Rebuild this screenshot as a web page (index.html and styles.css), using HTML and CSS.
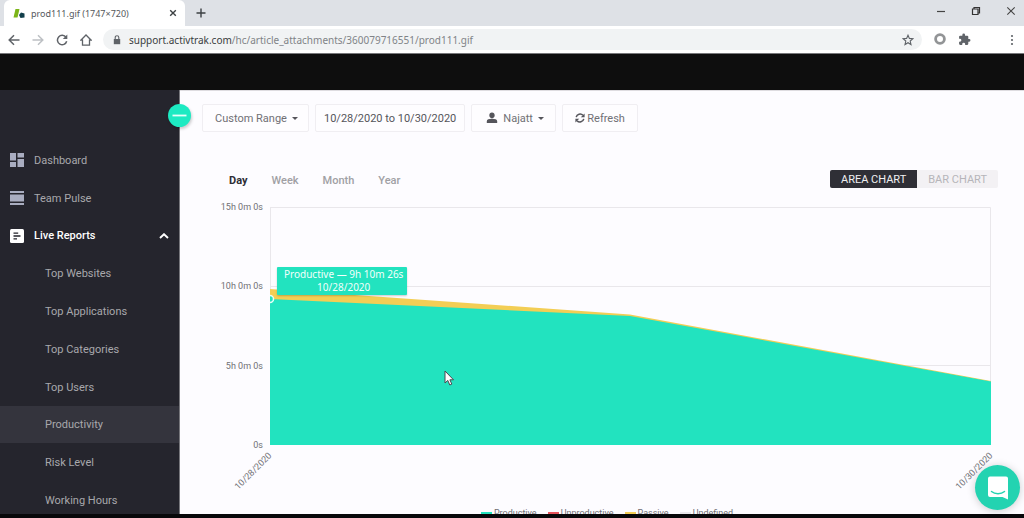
FILE: index.html
```html
<!DOCTYPE html>
<html lang="en">
<head>
<meta charset="utf-8">
<title>prod111.gif (1747×720)</title>
<link rel="stylesheet" href="styles.css">
</head>
<body>
<header class="browser">
  <div class="tabstrip">
    <div class="tab">
      <svg class="favicon" viewBox="0 0 12 12" width="12" height="12"><path d="M2.500 2h4l-2 8.500h-4z" fill="#7cb518"/><path d="M8 5.500l3.500 1v4l-4 .5-1.500-3z" fill="#123f4b"/></svg>
      <span class="tab-title">prod111.gif (1747×720)</span>
      <button class="plain" aria-label="Close tab"><svg viewBox="0 0 8 8" width="8" height="8"><path d="M1.200 1.200l5.600 5.600M6.800 1.200L1.200 6.800" stroke="#3c4043" stroke-width="1.400"/></svg></button>
    </div>
    <button class="plain new-tab" aria-label="New tab"><svg viewBox="0 0 10 10" width="10" height="10"><path d="M5 .5v9M.5 5h9" stroke="#3c4043" stroke-width="1.400"/></svg></button>
    <div class="window-controls">
      <button class="plain" aria-label="Minimize"><svg viewBox="0 0 10 10" width="10" height="10"><path d="M1 5.500h8" stroke="#444" stroke-width="1.200"/></svg></button>
      <button class="plain" aria-label="Restore"><svg viewBox="0 0 10 10" width="10" height="10"><path d="M1.500 3h5.500v5.500H1.500zM3 3V1.500h5.500V7H7" fill="none" stroke="#333" stroke-width="1.200"/></svg></button>
      <button class="plain" aria-label="Close"><svg viewBox="0 0 10 10" width="10" height="10"><path d="M1.300 1.300l7.400 7.400M8.700 1.300L1.300 8.700" stroke="#444" stroke-width="1.100"/></svg></button>
    </div>
  </div>
  <div class="navbar">
    <button class="plain" aria-label="Back"><svg viewBox="0 0 12 12" width="12" height="12"><path d="M11.500 6H1.500M6 1.200L1.200 6 6 10.800" fill="none" stroke="#5f6368" stroke-width="1.500"/></svg></button>
    <button class="plain" aria-label="Forward"><svg viewBox="0 0 12 12" width="12" height="12"><path d="M.5 6h10M6 1.200L10.800 6 6 10.800" fill="none" stroke="#bdc0c4" stroke-width="1.500"/></svg></button>
    <button class="plain" aria-label="Reload"><svg viewBox="0 0 12 12" width="12" height="12"><path d="M10 3.300A4.700 4.700 0 1 0 10.700 7.300" fill="none" stroke="#5f6368" stroke-width="1.500"/><path d="M11.300.5v4.500H6.800z" fill="#5f6368"/></svg></button>
    <button class="plain" aria-label="Home"><svg viewBox="0 0 12 12" width="12" height="12"><path d="M.8 6.200L6 1l5.200 5.200H9.500v5H2.500v-5z" fill="none" stroke="#5f6368" stroke-width="1.300"/></svg></button>
    <div class="address">
      <svg viewBox="0 0 8 10" width="8" height="10"><path d="M.8 4h6.400v5.200H.8z" fill="#5f6368"/><path d="M2.200 4V2.500a1.800 1.800 0 0 1 3.600 0V4" fill="none" stroke="#5f6368" stroke-width="1.100"/></svg>
      <a class="url" href="#"><span class="host">support.activtrak.com</span>/hc/article_attachments/360079716551/prod111.gif</a>
      <button class="plain" aria-label="Bookmark"><svg viewBox="0 0 12 12" width="12" height="12"><path d="M6 1.200l1.400 3.200 3.500.3-2.700 2.300.8 3.500L6 8.700l-3 1.800.8-3.500-2.700-2.300 3.500-.3z" fill="none" stroke="#5f6368" stroke-width="1.100"/></svg></button>
    </div>
    <div class="extensions">
      <svg viewBox="0 0 12 12" width="12" height="12"><circle cx="6" cy="6" r="4.400" fill="#fff" stroke="#929496" stroke-width="2.800"/></svg>
      <svg viewBox="0 0 24 24" width="13" height="13"><path fill="#5f6368" d="M20.500 11H19V7a2 2 0 0 0-2-2h-4V3.500a2.500 2.500 0 0 0-5 0V5H4a2 2 0 0 0-2 2v3.800h1.500a2.700 2.700 0 0 1 0 5.400H2V20a2 2 0 0 0 2 2h3.800v-1.500a2.700 2.700 0 0 1 5.400 0V22H17a2 2 0 0 0 2-2v-4h1.500a2.500 2.500 0 0 0 0-5z"/></svg>
    </div>
    <button class="plain" aria-label="Browser menu"><svg viewBox="0 0 4 12" width="4" height="12"><g fill="#5f6368"><circle cx="2" cy="2" r="1.100"/><circle cx="2" cy="6" r="1.100"/><circle cx="2" cy="10" r="1.100"/></g></svg></button>
  </div>
</header>
<div class="banner"></div>
<div class="app">
  <aside class="sidebar">
    <nav class="menu">
      <a class="item" href="#"><svg viewBox="0 0 14 14" width="14" height="14"><path fill="#a9adc0" d="M0 0h6v7.500H0zM7.500 0H14v4.500H7.500zM0 9h6v5H0zM7.500 6H14v8H7.500z"/></svg>Dashboard</a>
      <a class="item" href="#"><svg viewBox="0 0 14 14" width="14" height="14"><path fill="#a9adc0" d="M0 0h14v2H0zM0 3.500h14v7H0zM0 12h14v2H0z"/></svg>Team Pulse</a>
      <a class="item open" href="#"><svg viewBox="0 0 14 14" width="14" height="14"><rect width="14" height="14" rx="1.500" fill="#fff"/><path d="M3.500 4.200h4.700M3.500 7h7M3.500 9.800h3.500" stroke="#25252d" stroke-width="1.300"/></svg>Live Reports<svg class="chevron" viewBox="0 0 10 6" width="10" height="6"><path d="M1 5l4-3.800L9 5" fill="none" stroke="#fff" stroke-width="1.900"/></svg></a>
      <a class="item sub" href="#">Top Websites</a>
      <a class="item sub" href="#">Top Applications</a>
      <a class="item sub" href="#">Top Categories</a>
      <a class="item sub" href="#">Top Users</a>
      <a class="item sub current" href="#">Productivity</a>
      <a class="item sub" href="#">Risk Level</a>
      <a class="item sub" href="#">Working Hours</a>
    </nav>
  </aside>
  <button class="collapse" aria-label="Collapse menu"><svg viewBox="0 0 23 23" width="23" height="23"><path d="M4.500 11.500h14" stroke="#e5fffa" stroke-width="1.800"/></svg></button>
  <main class="report">
    <div class="filters">
      <label class="filter custom"><select aria-label="Range"><option>Custom Range</option></select><svg viewBox="0 0 6 3" width="6" height="3"><path d="M0 0h6L3 3z" fill="#55555b"/></svg></label>
      <button class="filter date">10/28/2020 to 10/30/2020</button>
      <label class="filter user"><svg viewBox="0 0 12 12" width="12" height="12"><path d="M6 .5c1.700 0 2.700 1.200 2.700 2.800S7.700 6.300 6 6.300 3.300 4.900 3.300 3.300 4.300.5 6 .5zM.8 11V9.300C.8 7.500 3 6.800 6 6.800s5.200.7 5.200 2.500V11z" fill="#55555b"/></svg><select aria-label="User"><option>Najatt</option></select><svg viewBox="0 0 6 3" width="6" height="3"><path d="M0 0h6L3 3z" fill="#55555b"/></svg></label>
      <button class="filter refresh"><svg viewBox="0 0 10 10" width="10" height="10"><path d="M1.200 4.200A4 4 0 0 1 8 2.300M8.800 5.800A4 4 0 0 1 2 7.700" fill="none" stroke="#55555b" stroke-width="1.500"/><path d="M9.600.4v3.800H5.800zM.4 9.600V5.800h3.800z" fill="#55555b"/></svg>Refresh</button>
    </div>
    <div class="chart-head">
      <div class="periods">
        <button class="plain active">Day</button>
        <button class="plain">Week</button>
        <button class="plain">Month</button>
        <button class="plain">Year</button>
      </div>
      <div class="toggle">
        <button class="plain on">AREA CHART</button>
        <button class="plain">BAR CHART</button>
      </div>
    </div>
    <div class="chart">
      <div class="y-axis"><span>15h 0m 0s</span><span>10h 0m 0s</span><span>5h 0m 0s</span><span>0s</span></div>
      <div class="plot">
        <svg class="areas" viewBox="0 0 721 238" preserveAspectRatio="none">
          <path d="M0 .5h720.500V238M0 79.500h721M0 158.500h721M.5 0v238" fill="none" stroke="#e9e7eb"/>
          <path d="M0 82L360 107.500 721 174v1L360 110 0 93z" fill="#f3ce55"/>
          <path d="M0 92L360 109 721 174.500V238H0z" fill="#22e3bf"/>
          <circle cx="0" cy="92" r="3.500" fill="#22e3bf" stroke="#e8fff9" stroke-width="1.500"/>
        </svg>
        <div class="tooltip">Productive — 9h 10m 26s<br>10/28/2020</div>
        <svg class="pointer" viewBox="0 0 10 16" width="10" height="16"><path d="M1 1v12l2.800-2.600L5.800 15l2-.9-1.900-4.300h3.600z" fill="#fff" stroke="#4d4650"/></svg>
      </div>
      <div class="x-axis"><span>10/28/2020</span><span>10/30/2020</span></div>
    </div>
    <div class="legend">
      <span class="key productive">Productive</span>
      <span class="key unproductive">Unproductive</span>
      <span class="key passive">Passive</span>
      <span class="key undefined">Undefined</span>
    </div>
  </main>
  <button class="chat" aria-label="Open chat"><svg viewBox="0 0 22 24" width="22" height="24"><path d="M3 .5h16a2 2 0 0 1 2 2V23.500L15.500 21H3a2 2 0 0 1-2-2V2.500a2 2 0 0 1 2-2z" fill="#fff"/><path d="M4.500 15.500c3.500 3 9.500 3 13 0" fill="none" stroke="#23d3b1" stroke-width="1.500" stroke-linecap="round"/></svg></button>
</div>
</body>
</html>
```
FILE: styles.css
```css
* { box-sizing: border-box; }

body {
  margin: 0;
  height: 100vh;
  display: flex;
  flex-direction: column;
  overflow: hidden;
  background: #08080a;
  font-family: Roboto, sans-serif;
  font-size: 11px;
}

button, select { font: inherit; color: inherit; }
a { color: inherit; text-decoration: none; }
svg { display: block; flex: none; }
.plain { border: 0; padding: 0; background: none; }

/* Browser window */
.browser {
  font-family: "Noto Sans", sans-serif;
  background: #fff;
  border-bottom: 1px solid #77777a;
}
.tabstrip {
  display: flex;
  align-items: center;
  height: 26px;
  background: #dee1e6;
}
.tab {
  display: flex;
  align-items: center;
  gap: 6px;
  width: 181px;
  height: 26px;
  margin-left: 4px;
  padding: 0 8px 0 9px;
  border-radius: 6px 6px 0 0;
  background: #fff;
}
.tab-title { flex: 1; font-size: 9px; color: #55585c; white-space: nowrap; }
.new-tab { margin-left: 11px; }
.window-controls {
  display: flex;
  gap: 25px;
  margin: 0 8px 4px auto;
}
.navbar {
  display: flex;
  align-items: center;
  gap: 12px;
  height: 27px;
  padding: 0 10px 0 8px;
}
.address {
  flex: 1;
  display: flex;
  align-items: center;
  gap: 8px;
  height: 21px;
  margin-left: -1px;
  padding: 0 8px 0 10px;
  border-radius: 11px;
  background: #f1f3f4;
}
.url { flex: 1; font-size: 10px; color: #808387; }
.host { color: #3a3d40; }
.extensions { display: flex; gap: 12px; margin-right: 27px; }

.banner { height: 36px; background: #0e0e0e; }

/* Application */
.app {
  flex: 1;
  min-height: 0;
  display: flex;
  position: relative;
  margin-bottom: 4px;
}
.sidebar {
  flex: none;
  width: 180px;
  padding-top: 51px;
  overflow: hidden;
  background: #25252d;
  border-right: 1px solid #77777c;
}
.menu { display: grid; grid-auto-rows: 1fr; height: 378px; }
.item {
  display: flex;
  align-items: center;
  gap: 10px;
  padding: 1px 10px 0;
  color: #a8a8ac;
}
.open { color: #fff; font-weight: 500; }
.sub { padding-left: 45px; }
.current { background: #34343d; }
.chevron { margin-left: auto; }
.collapse {
  position: absolute;
  left: 168px;
  top: 14px;
  padding: 0;
  border: 0;
  border-radius: 50%;
  background: #1deac2;
  box-shadow: 1px 2px 3px #0003;
}

.report {
  flex: 1;
  min-width: 0;
  overflow: hidden;
  background: #fdfcff;
  border-top: 1px solid #dedce0;
  color: #707075;
}
.filters { display: flex; gap: 6px; padding: 13px 22px 0; }
.filter {
  display: flex;
  align-items: center;
  gap: 5px;
  height: 28px;
  padding: 0 12px;
  border: 1px solid #f0eef2;
  border-radius: 2px;
  background: #fefdff;
}
.filter select {
  appearance: none;
  padding: 0;
  border: 0;
  background: none;
}
.custom { padding-right: 10px; }
.date { padding: 0 8px; color: #55555a; }
.user { padding: 0 11px 0 14px; }
.refresh { gap: 2px; }

.chart-head {
  display: flex;
  align-items: center;
  justify-content: space-between;
  margin-top: 38px;
  padding: 0 26px 0 49px;
}
.periods { display: flex; gap: 24px; padding-top: 2px; font-weight: 500; color: #a0a0a4; }
.active { color: #2e2e36; font-weight: 700; }
.toggle { display: flex; border-radius: 2px; overflow: hidden; background: #f3f1f4; color: #b6b5b9; }
.toggle button { height: 18px; padding: 0 11px; }
.toggle .on { background: #2f2f36; color: #f0f0f2; }

.chart {
  display: grid;
  grid-template-columns: 90px 1fr;
  grid-template-rows: 238px 61px;
  margin: 19px 33px 0 0;
  font-size: 9px;
}
.y-axis {
  display: flex;
  flex-direction: column;
  justify-content: space-between;
  margin: -6px 7px -6px 0;
  line-height: 12px;
  text-align: right;
}
.plot { position: relative; }
.areas { width: 100%; height: 100%; }
.tooltip {
  position: absolute;
  left: 7px;
  top: 60px;
  padding: 1px 4px 1px 7px;
  border-radius: 1px;
  background: #22e3bf;
  color: #f2fffc;
  font-family: "Noto Sans", sans-serif;
  font-size: 10px;
  line-height: 13px;
  text-align: center;
  white-space: nowrap;
  box-shadow: 0 1px 2px #0003;
}
.pointer { position: absolute; left: 174px; top: 163px; }
.x-axis {
  grid-column: 1 / 3;
  display: flex;
  justify-content: space-between;
  padding-top: 3px;
  line-height: 12px;
}
.x-axis span {
  width: 90px;
  height: 12px;
  text-align: right;
  transform: rotate(-45deg);
  transform-origin: right center;
}

.legend {
  display: flex;
  justify-content: center;
  gap: 11px;
  padding-left: 10px;
  font-size: 9px;
  line-height: 14px;
}
.key { display: flex; align-items: center; gap: 2px; }
.key::before { content: ""; width: 11px; height: 3px; background: #e9e7eb; }
.productive::before { background: #22e3bf; }
.unproductive::before { background: #e5535b; }
.passive::before { background: #f3ce55; }

.chat {
  position: absolute;
  right: 4px;
  bottom: 4px;
  display: grid;
  place-items: center;
  width: 45px;
  height: 45px;
  padding: 0;
  border: 0;
  border-radius: 50%;
  background: #23d3b1;
  box-shadow: 0 1px 8px #0003;
}
```
